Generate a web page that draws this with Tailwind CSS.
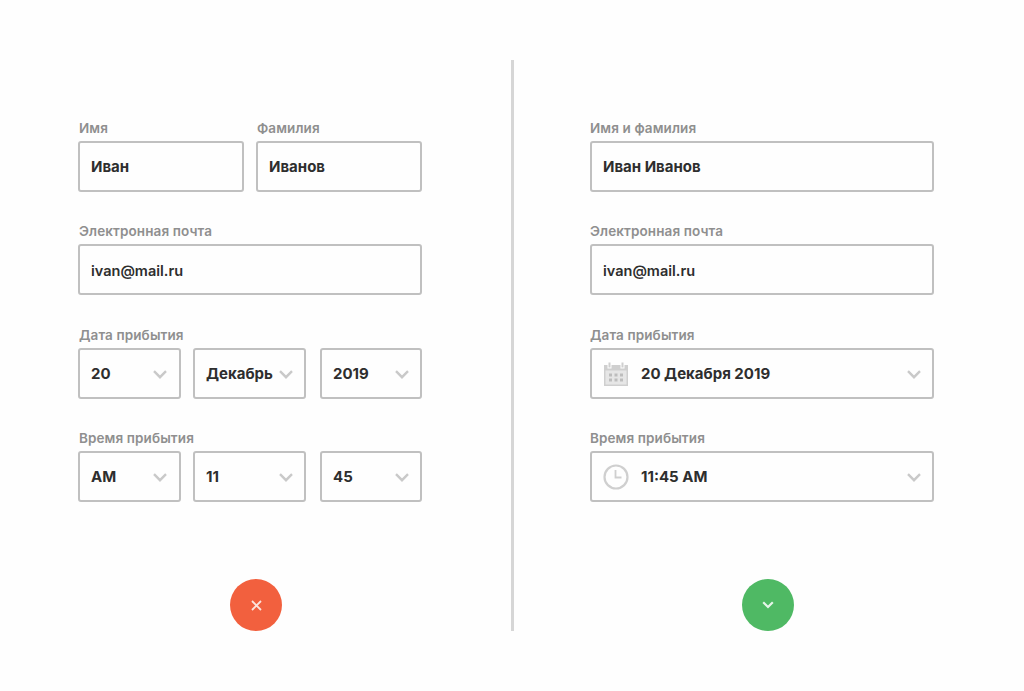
<!DOCTYPE html>
<html lang="ru">
<head>
  <meta charset="UTF-8">
  <title>Форма</title>
  <script src="https://cdn.jsdelivr.net/npm/@tailwindcss/browser@4"></script>
</head>
<body class="bg-[#fefefe] font-['Inter',sans-serif] text-[#2e2e2e]">
  <div class="flex w-[1024px] h-[691px] pt-[60px]">

    <!-- Left form -->
    <section class="w-[511px] pl-[78px] pt-[60px]">
      <div class="w-[344px]">
        <div class="flex gap-3">
          <div class="w-[166px]">
            <p class="h-[21px] pl-px text-[13.5px] tracking-[0.1px] leading-4 font-semibold text-[#8f8f8f]">Имя</p>
            <div class="flex items-center h-[51px] pt-[2px] px-[11px] border-2 border-[#c0c0c0] rounded-[3px] text-[15px] font-bold">Иван</div>
          </div>
          <div class="w-[166px]">
            <p class="h-[21px] pl-px text-[13.5px] tracking-[0.1px] leading-4 font-semibold text-[#8f8f8f]">Фамилия</p>
            <div class="flex items-center h-[51px] pt-[2px] px-[11px] border-2 border-[#c0c0c0] rounded-[3px] text-[15px] font-bold">Иванов</div>
          </div>
        </div>

        <p class="h-[21px] mt-[31px] pl-px text-[13.5px] tracking-[0.1px] leading-4 font-semibold text-[#8f8f8f]">Электронная почта</p>
        <div class="flex items-center h-[51px] pt-[2px] px-[11px] border-2 border-[#c0c0c0] rounded-[3px] text-[14.5px] font-semibold">ivan@mail.ru</div>

        <p class="h-[21px] mt-[32px] pl-px text-[13.5px] tracking-[0.1px] leading-4 font-semibold text-[#8f8f8f]">Дата прибытия</p>
        <div class="flex">
          <div class="flex items-center justify-between w-[103px] h-[51px] pt-[2px] pl-[11px] pr-3 border-2 border-[#c0c0c0] rounded-[3px] text-[15px] font-bold">
            20
            <svg class="w-[14px] h-[9px]" viewBox="0 0 14 9" fill="none" stroke="#c9c9c9" stroke-width="2.4"><path d="M1 1.2l6 6 6-6"/></svg>
          </div>
          <div class="flex items-center justify-between w-[113px] h-[51px] ml-3 pt-[2px] pl-[11px] pr-[11px] border-2 border-[#c0c0c0] rounded-[3px] text-[15px] font-bold">
            Декабрь
            <svg class="w-[14px] h-[9px]" viewBox="0 0 14 9" fill="none" stroke="#c9c9c9" stroke-width="2.4"><path d="M1 1.2l6 6 6-6"/></svg>
          </div>
          <div class="flex items-center justify-between w-[102px] h-[51px] ml-[14px] pt-[2px] pl-[11px] pr-[11px] border-2 border-[#c0c0c0] rounded-[3px] text-[15px] font-bold">
            2019
            <svg class="w-[14px] h-[9px]" viewBox="0 0 14 9" fill="none" stroke="#c9c9c9" stroke-width="2.4"><path d="M1 1.2l6 6 6-6"/></svg>
          </div>
        </div>

        <p class="h-[21px] mt-[31px] pl-px text-[13.5px] tracking-[0.1px] leading-4 font-semibold text-[#8f8f8f]">Время прибытия</p>
        <div class="flex">
          <div class="flex items-center justify-between w-[103px] h-[51px] pt-[2px] pl-[11px] pr-3 border-2 border-[#c0c0c0] rounded-[3px] text-[15px] font-bold">
            AM
            <svg class="w-[14px] h-[9px]" viewBox="0 0 14 9" fill="none" stroke="#c9c9c9" stroke-width="2.4"><path d="M1 1.2l6 6 6-6"/></svg>
          </div>
          <div class="flex items-center justify-between w-[113px] h-[51px] ml-3 pt-[2px] pl-[11px] pr-[11px] border-2 border-[#c0c0c0] rounded-[3px] text-[15px] font-bold">
            11
            <svg class="w-[14px] h-[9px]" viewBox="0 0 14 9" fill="none" stroke="#c9c9c9" stroke-width="2.4"><path d="M1 1.2l6 6 6-6"/></svg>
          </div>
          <div class="flex items-center justify-between w-[102px] h-[51px] ml-[14px] pt-[2px] pl-[11px] pr-[11px] border-2 border-[#c0c0c0] rounded-[3px] text-[15px] font-bold">
            45
            <svg class="w-[14px] h-[9px]" viewBox="0 0 14 9" fill="none" stroke="#c9c9c9" stroke-width="2.4"><path d="M1 1.2l6 6 6-6"/></svg>
          </div>
        </div>

        <div class="flex justify-center mt-[77px] pl-3">
          <div class="flex items-center justify-center w-[52px] h-[52px] rounded-full bg-[#f2603e]">
            <svg class="w-[11px] h-[11px]" viewBox="0 0 11 11" fill="none" stroke="#fbe3dc" stroke-width="1.8"><path d="M1 1l9 9M10 1l-9 9"/></svg>
          </div>
        </div>
      </div>
    </section>

    <!-- Divider -->
    <div class="w-[3px] h-[571px] bg-[#d6d6d6]"></div>

    <!-- Right form -->
    <section class="pl-[76px] pt-[60px]">
      <div class="w-[344px]">
        <p class="h-[21px] text-[13.5px] tracking-[0.1px] leading-4 font-semibold text-[#8f8f8f]">Имя и фамилия</p>
        <div class="flex items-center h-[51px] pt-[2px] px-[11px] border-2 border-[#c0c0c0] rounded-[3px] text-[15px] font-bold">Иван Иванов</div>

        <p class="h-[21px] mt-[31px] text-[13.5px] tracking-[0.1px] leading-4 font-semibold text-[#8f8f8f]">Электронная почта</p>
        <div class="flex items-center h-[51px] pt-[2px] px-[11px] border-2 border-[#c0c0c0] rounded-[3px] text-[14.5px] font-semibold">ivan@mail.ru</div>

        <p class="h-[21px] mt-[32px] text-[13.5px] tracking-[0.1px] leading-4 font-semibold text-[#8f8f8f]">Дата прибытия</p>
        <div class="flex items-center h-[51px] pl-[11px] pr-[11px] border-2 border-[#c0c0c0] rounded-[3px] text-[15px] font-bold">
          <svg class="w-[26px] h-[26px] mr-3" viewBox="0 0 26 26">
            <path d="M1 4h24v21H1z" fill="#cfcfcf"/>
            <path d="M2.500 9.500h21v14h-21z" fill="#e6e6e6"/>
            <rect x="5" y="1" width="3" height="6" fill="#cfcfcf" stroke="#fefefe"/>
            <rect x="18" y="1" width="3" height="6" fill="#cfcfcf" stroke="#fefefe"/>
            <path d="M6 12.500h3v3H6zM11.500 12.500h3v3h-3zM17 12.500h3v3h-3zM6 17.500h3v3H6zM11.500 17.500h3v3h-3zM17 17.500h3v3h-3z" fill="#bdbdbd"/>
          </svg>
          <span class="flex-1 pt-[2px]">20 Декабря 2019</span>
          <svg class="w-[14px] h-[9px] mt-[2px]" viewBox="0 0 14 9" fill="none" stroke="#c9c9c9" stroke-width="2.4"><path d="M1 1.2l6 6 6-6"/></svg>
        </div>

        <p class="h-[21px] mt-[31px] text-[13.5px] tracking-[0.1px] leading-4 font-semibold text-[#8f8f8f]">Время прибытия</p>
        <div class="flex items-center h-[51px] pl-[11px] pr-[11px] border-2 border-[#c0c0c0] rounded-[3px] text-[15px] font-bold">
          <svg class="w-[26px] h-[26px] mr-3" viewBox="0 0 26 26" fill="none" stroke="#cfcfcf">
            <circle cx="13" cy="13" r="11.500" stroke-width="2.200"/>
            <path d="M12.500 6v7.500h6" stroke-width="1.800"/>
          </svg>
          <span class="flex-1 pt-[2px]">11:45 AM</span>
          <svg class="w-[14px] h-[9px] mt-[2px]" viewBox="0 0 14 9" fill="none" stroke="#c9c9c9" stroke-width="2.4"><path d="M1 1.2l6 6 6-6"/></svg>
        </div>

        <div class="flex justify-center mt-[77px] pl-3">
          <div class="flex items-center justify-center w-[52px] h-[52px] rounded-full bg-[#4fb964]">
            <svg class="w-[12px] h-[8px]" viewBox="0 0 12 8" fill="none" stroke="#e6f5e9" stroke-width="2.2"><path d="M1.200 1.200L6 6l4.800-4.800"/></svg>
          </div>
        </div>
      </div>
    </section>
  </div>
</body>
</html>
